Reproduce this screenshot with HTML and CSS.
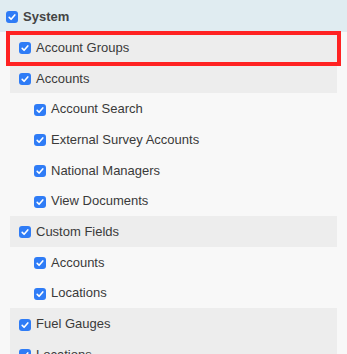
FILE: index.html
```html
<!DOCTYPE html>
<html lang="en">
<head>
    <meta charset="UTF-8">
    <meta name="viewport" content="width=device-width, initial-scale=1.0">
    <title>Permissions</title>
    <link rel="stylesheet" href="styles.css">
</head>
<body>
    <div class="tree">
        <div class="row root">
            <span class="cb"><svg viewBox="0 0 12 12"><path d="M3.2 6.4 L5.1 8.3 L8.8 3.9" /></svg></span>
            <span class="label">System</span>
        </div>
        <ul class="level1">
            <li>
                <div class="row highlight">
                    <span class="cb"><svg viewBox="0 0 12 12"><path d="M3.2 6.4 L5.1 8.3 L8.8 3.9" /></svg></span>
                    <span class="label">Account Groups</span>
                </div>
            </li>
            <li>
                <div class="row">
                    <span class="cb"><svg viewBox="0 0 12 12"><path d="M3.2 6.4 L5.1 8.3 L8.8 3.9" /></svg></span>
                    <span class="label">Accounts</span>
                </div>
                <ul class="level2">
                    <li class="row">
                        <span class="cb"><svg viewBox="0 0 12 12"><path d="M3.2 6.4 L5.1 8.3 L8.8 3.9" /></svg></span>
                        <span class="label">Account Search</span>
                    </li>
                    <li class="row">
                        <span class="cb"><svg viewBox="0 0 12 12"><path d="M3.2 6.4 L5.1 8.3 L8.8 3.9" /></svg></span>
                        <span class="label">External Survey Accounts</span>
                    </li>
                    <li class="row">
                        <span class="cb"><svg viewBox="0 0 12 12"><path d="M3.2 6.4 L5.1 8.3 L8.8 3.9" /></svg></span>
                        <span class="label">National Managers</span>
                    </li>
                    <li class="row">
                        <span class="cb"><svg viewBox="0 0 12 12"><path d="M3.2 6.4 L5.1 8.3 L8.8 3.9" /></svg></span>
                        <span class="label">View Documents</span>
                    </li>
                </ul>
            </li>
            <li>
                <div class="row">
                    <span class="cb"><svg viewBox="0 0 12 12"><path d="M3.2 6.4 L5.1 8.3 L8.8 3.9" /></svg></span>
                    <span class="label">Custom Fields</span>
                </div>
                <ul class="level2">
                    <li class="row">
                        <span class="cb"><svg viewBox="0 0 12 12"><path d="M3.2 6.4 L5.1 8.3 L8.8 3.9" /></svg></span>
                        <span class="label">Accounts</span>
                    </li>
                    <li class="row">
                        <span class="cb"><svg viewBox="0 0 12 12"><path d="M3.2 6.4 L5.1 8.3 L8.8 3.9" /></svg></span>
                        <span class="label">Locations</span>
                    </li>
                </ul>
            </li>
            <li>
                <div class="row">
                    <span class="cb"><svg viewBox="0 0 12 12"><path d="M3.2 6.4 L5.1 8.3 L8.8 3.9" /></svg></span>
                    <span class="label">Fuel Gauges</span>
                </div>
            </li>
            <li>
                <div class="row">
                    <span class="cb"><svg viewBox="0 0 12 12"><path d="M3.2 6.4 L5.1 8.3 L8.8 3.9" /></svg></span>
                    <span class="label">Locations</span>
                </div>
            </li>
        </ul>
    </div>
</body>
</html>
```

FILE: styles.css
```css
* {
    margin: 0;
    padding: 0;
    box-sizing: border-box;
}

body {
    background-color: #f8f8f8;
    font-family: 'Liberation Sans', Arial, sans-serif;
    font-size: 13px;
    color: #3a3a3a;
    overflow: hidden;
}

ul {
    list-style: none;
}

.row {
    display: flex;
    align-items: center;
    gap: 5px;
    height: 30.7px;
}

.root {
    height: 32px;
    padding-left: 6px;
    background-color: #e0ecf1;
    font-weight: bold;
    color: #444;
}

.level1 > li > .row {
    margin: 0 10px;
    padding-left: 9px;
    background-color: #ededed;
}

.level2 .row {
    padding-left: 34px;
}

.cb {
    width: 12px;
    height: 12px;
    flex-shrink: 0;
    margin-top: 2px;
    border-radius: 3px;
    background-color: #2f7cf6;
    display: flex;
}

.cb svg {
    width: 12px;
    height: 12px;
    fill: none;
    stroke: #fff;
    stroke-width: 1.6;
    stroke-linecap: round;
    stroke-linejoin: round;
}

.highlight {
    position: relative;
}

.highlight::after {
    content: '';
    position: absolute;
    top: -1px;
    left: -4px;
    right: -4px;
    bottom: -3.3px;
    border: 4px solid #ff2222;
}
```
